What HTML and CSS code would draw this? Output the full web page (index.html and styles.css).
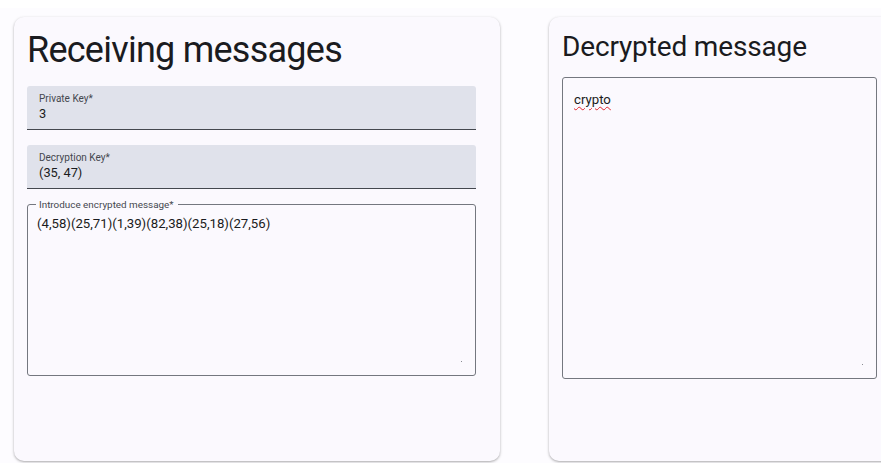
FILE: index.html
```html
<!DOCTYPE html>
<html lang="en">
<head>
<meta charset="utf-8">
<title>Receiving messages</title>
<link rel="stylesheet" href="styles.css">
</head>
<body>
<div class="topbar"></div>
<main class="page">
  <section class="card card-receive">
    <h1 class="card-title">Receiving messages</h1>
    <form class="form">
      <label class="filled-field">
        <span class="field-label">Private Key*</span>
        <span class="field-value">3</span>
      </label>
      <label class="filled-field">
        <span class="field-label">Decryption Key*</span>
        <span class="field-value">(35, 47)</span>
      </label>
      <div class="outlined-area area-encrypted">
        <span class="area-label">Introduce encrypted message*</span>
        <div class="area-text">(4,58)(25,71)(1,39)(82,38)(25,18)(27,56)</div>
        <span class="resize-dot"></span>
      </div>
    </form>
  </section>
  <section class="card card-result">
    <h2 class="card-subtitle">Decrypted message</h2>
    <div class="outlined-area area-result">
      <div class="area-text"><span class="misspelled">crypto</span></div>
      <span class="resize-dot"></span>
    </div>
  </section>
</main>
</body>
</html>
```

FILE: styles.css
```css
html, body {
  margin: 0;
  padding: 0;
  height: 100%;
  overflow: hidden;
}

body {
  background: #fdfcff;
  font-family: Roboto, "Noto Sans", Arial, sans-serif;
  color: #1a1b20;
}

.topbar {
  height: 8px;
  background: #ffffff;
}

.page {
  display: flex;
  gap: 49px;
  padding: 9px 0 0 14px;
}

.card {
  flex: none;
  box-sizing: border-box;
  height: 444px;
  background: #fbf9fe;
  border-radius: 10px;
  box-shadow: 0 1px 2px rgba(0, 0, 0, 0.24), 0 1px 3px 1px rgba(0, 0, 0, 0.07);
  padding: 0 13px;
}

.card-receive {
  width: 486px;
}

.card-result {
  width: 360px;
}

.card-title {
  margin: 0;
  padding-top: 12px;
  font-size: 36px;
  font-weight: 400;
  line-height: 42px;
  height: 57px;
  letter-spacing: -0.75px;
}

.card-subtitle {
  margin: 0;
  padding-top: 12px;
  font-size: 28px;
  font-weight: 400;
  line-height: 36px;
  height: 48px;
  letter-spacing: -0.15px;
}

.form {
  display: flex;
  flex-direction: column;
  gap: 15px;
  width: 449px;
}

.filled-field {
  box-sizing: border-box;
  height: 44px;
  background: #e0e2eb;
  border-radius: 3px 3px 0 0;
  border-bottom: 1px solid #44474e;
  padding: 6px 12px 0;
  display: flex;
  flex-direction: column;
}

.field-label {
  font-size: 10px;
  line-height: 13px;
  color: #44474e;
}

.field-value {
  font-size: 12.8px;
  line-height: 17px;
  color: #1a1b20;
}

.outlined-area {
  position: relative;
  box-sizing: border-box;
  border: 1px solid #74777f;
  border-radius: 3px;
}

.area-encrypted {
  height: 172px;
  padding: 10px 12px 0 9px;
}

.area-result {
  width: 315px;
  height: 302px;
  padding: 13px 12px 0 11px;
}

.area-label {
  position: absolute;
  top: -7px;
  left: 8px;
  padding: 0 4px 0 3px;
  background: #fbf9fe;
  font-size: 9.9px;
  line-height: 13px;
  color: #44474e;
}

.area-text {
  font-size: 13.2px;
  line-height: 17px;
  color: #1a1b20;
}

.misspelled {
  text-decoration: underline wavy #e0242c;
  text-decoration-thickness: 1px;
  text-underline-offset: 2px;
}

.resize-dot {
  position: absolute;
  right: 13px;
  bottom: 13px;
  width: 1px;
  height: 1px;
  background: #8a8c93;
}
```
